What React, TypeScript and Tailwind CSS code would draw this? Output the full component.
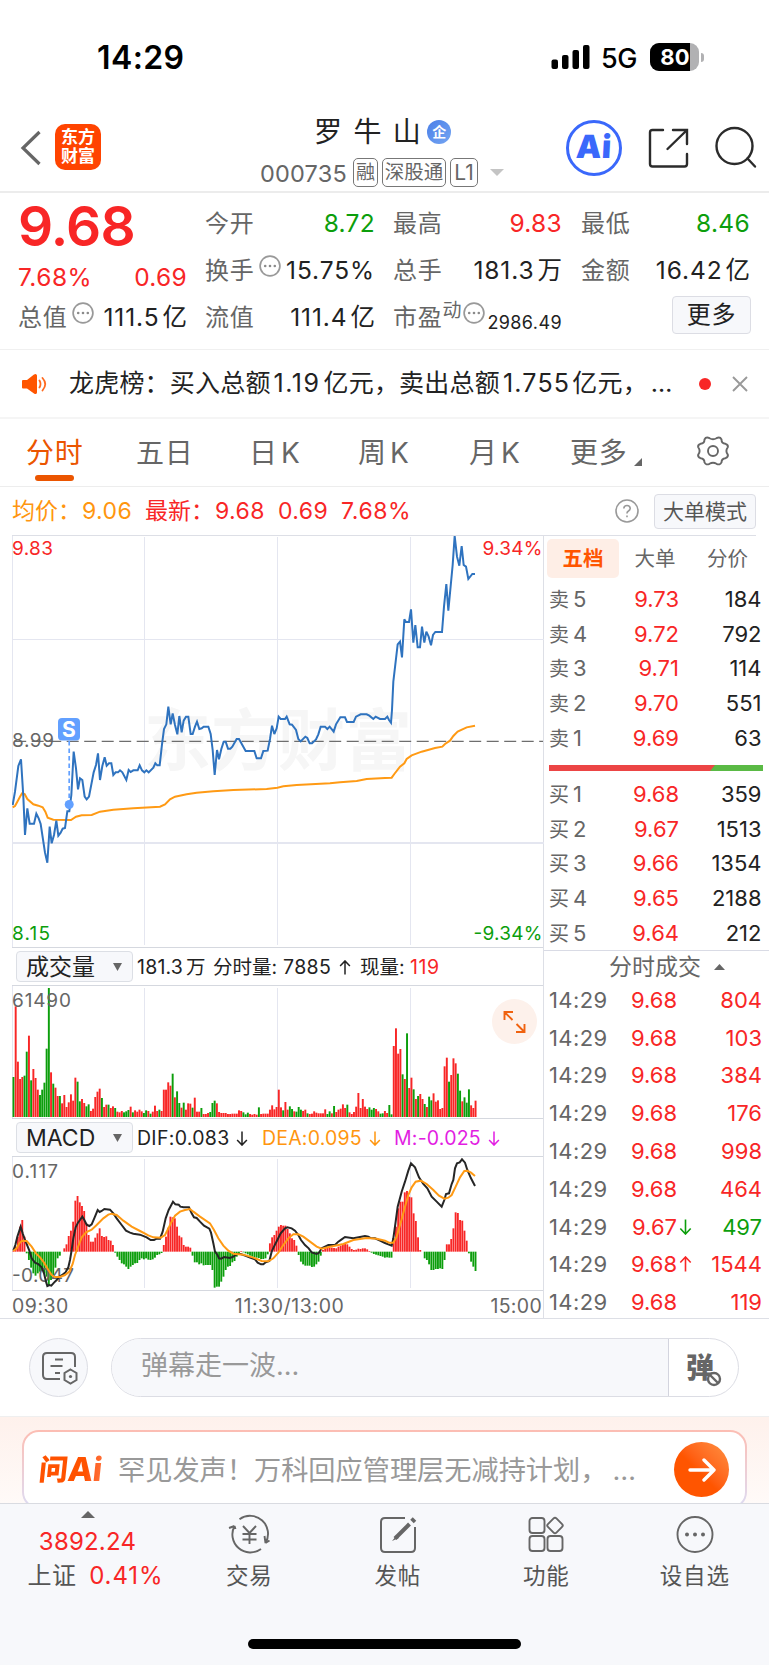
import React from "react";

type Tone = "up" | "down";

const priceLine =
  "38,315 45,275 55,198 63,178 70,290 75,405 82,325 89,371 102,371 109,341 116,355 122,372 135,458 142,488 149,380 155,430 162,405 169,362 175,407 182,398 188,386 195,384 202,334 208,334 214,285 221,155 228,205 234,268 240,235 247,240 254,290 260,298 267,290 281,217 288,195 294,160 300,240 307,198 314,172 320,197 327,190 334,190 340,225 347,217 354,217 360,211 367,217 379,240 386,210 392,216 400,211 413,211 419,196 426,211 433,217 439,211 446,217 460,203 466,190 472,196 479,196 486,133 492,87 499,73 505,20 512,73 518,40 525,75 532,103 538,48 545,97 551,62 558,50 565,50 572,102 578,102 585,80 591,65 598,87 605,85 611,80 625,80 632,102 638,150 644,225 651,150 657,178 664,147 671,125 677,125 684,146 691,146 697,140 710,117 717,117 737,153 763,153 770,175 783,175 790,153 803,152 810,117 816,77 823,102 830,85 836,50 842,57 855,57 860,50 869,73 876,74 888,90 895,117 902,124 916,110 922,114 929,130 936,130 948,118 955,103 962,80 975,80 982,87 989,80 1001,95 1008,73 1021,52 1035,52 1041,66 1061,66 1068,50 1082,43 1100,43 1108,47 1120,57 1127,50 1140,57 1155,57 1162,50 1167,60 1173,68 1176,30 1180,-55 1193,-167 1200,-175 1206,-128 1213,-242 1218,-234 1227,-234 1233,-272 1240,-172 1246,-225 1253,-158 1260,-158 1266,-220 1273,-172 1279,-205 1286,-190 1293,-164 1299,-195 1306,-204 1326,-204 1332,-280 1339,-348 1345,-268 1358,-405 1364,-492 1371,-430 1378,-403 1385,-462 1391,-405 1398,-400 1405,-363 1417,-378 1425,-378";

const averageLine =
  "38,322 45,318 52,305 60,290 66,280 74,282 82,297 100,313 115,317 128,322 136,335 143,353 160,359 213,360 228,350 245,346 275,345 300,335 340,329 400,325 480,320 495,313 510,298 525,290 560,283 590,278 640,274 700,270 800,267 832,263 850,259 890,255 990,250 1020,247 1070,243 1100,237 1155,234 1175,233 1183,222 1200,200 1213,190 1220,177 1235,166 1265,155 1305,144 1327,140 1335,132 1350,122 1360,108 1373,95 1400,82 1425,77";

// One entry per minute; negative values are falling minutes.
const volumes = [
  -120, 332, 166, 114, 120, -124, -196, 244, -110, 144, 117, 82, -66, -82, -103, -205, -387, 134, -100, 88, 63, -63, 41, 66, 30, 44, 68, 49, 118, -106,
  -47, 54, 42, -32, -38, 18, 25, 60, 76, 85, -57, 30, 37, -37, 27, 32, -27, 16, 14, 18, -14, -17, -21, 31, -14, 20, 16, 22, 17, -12,
  -20, 18, -10, 16, 34, 18, -22, 18, 82, 82, 104, 94, -130, 59, -77, -42, 28, -43, 22, 41, 40, -28, 58, 16, 16, -27, 9, 9, 12, -15,
  -42, -49, 41, 15, 12, 12, 12, 9, 9, 10, 10, 10, 20, 18, -14, -8, -13, 9, 7, 9, 7, -29, 9, 10, 10, 10, 22, 35, 23, 30,
  82, 29, -20, 45, 22, -32, -24, 17, -16, -30, -22, 18, 22, -11, 9, 10, 17, 13, 11, 11, 11, 23, -9, -17, 11, -33, 15, 22, 25, 38,
  27, -37, 14, 9, 15, 31, 72, 27, 54, 31, 24, -29, -22, -27, 24, 17, -10, -11, 18, 12, -36, -8, 213, 266, 190, 204, -128, 114, -251, 87,
  118, -83, 54, -63, 69, 54, -39, 30, -61, -50, 71, 46, 50, 24, 27, 152, 178, -106, 126, 176, 161, -130, -79, 47, -59, -43, -83, 35, 27, 49,
];

const macdBars = [
  2, 15, 45, 75, 95, 45, -5, -25, -48, -65, -72, -65, -60, -58, -65, -75, -100, -85, -72, -48, -20, -12, 0, 10, 22, 47, 63, 90, 153, 167,
  148, 137, 122, 85, 50, 30, 30, 42, 55, 70, 47, 44, 46, 35, 33, 20, -3, -15, -25, -35, -38, -45, -52, -45, -40, -35, -34, -25, -20, -23,
  -20, -24, -25, -23, -18, -10, -8, -4, 20, 45, 72, 105, 103, 100, 75, 48, 43, 20, 15, 15, 12, -12, -32, -32, -38, -35, -41, -40, -40, -40,
  -55, -108, -105, -105, -90, -75, -55, -45, -43, -32, -28, -15, -5, 2, -2, -5, -8, -12, -15, -17, -18, -19, -22, -22, -20, -8, 25, 43, 50, 63,
  75, 80, 78, 78, 68, 55, 40, 35, 18, -10, -30, -38, -42, -42, -42, -46, -45, -38, -30, -12, 5, 10, 12, 12, 12, 11, 10, 15, 18, 22,
  26, 22, 15, 8, 5, 6, 9, 8, 10, 10, 7, 2, -3, -7, -9, -11, -13, -15, -18, -17, -18, -18, 40, 75, 130, 150, 150, 178, 182, 165,
  163, 115, 92, 43, 5, 0, -20, -25, -38, -55, -55, -52, -52, -50, -52, -25, 22, 22, 38, 70, 118, 116, 95, 93, 63, 33, -5, -30, -45, -58,
];

const difLine =
  "40,812 46,795 52,770 62,740 68,760 75,780 88,812 95,835 105,848 115,852 125,862 132,880 138,905 142,918 148,915 154,917 162,908 170,900 178,890 188,884 196,878 205,862 210,840 215,810 220,775 227,742 234,728 247,710 253,720 260,734 268,738 275,733 284,712 293,690 299,696 305,693 313,687 330,689 340,700 350,715 365,735 378,752 390,758 400,761 420,764 440,772 452,780 462,780 470,776 480,776 488,755 497,715 506,690 519,665 526,673 536,674 541,680 551,682 567,682 575,700 582,712 590,714 600,725 612,737 628,746 633,758 640,790 645,815 652,824 657,835 664,836 672,831 690,834 700,830 712,822 722,822 735,827 750,833 765,838 773,848 783,853 790,853 797,847 808,843 815,815 822,800 832,780 842,760 855,745 862,742 875,745 885,752 895,765 903,780 915,795 926,805 935,817 950,822 957,818 965,805 975,800 985,795 1005,795 1015,785 1025,778 1035,771 1060,775 1080,771 1095,768 1105,770 1112,774 1125,775 1140,782 1155,789 1165,793 1175,797 1180,775 1187,725 1193,680 1205,635 1215,605 1225,572 1233,550 1245,562 1257,592 1270,612 1282,625 1295,650 1310,665 1325,680 1333,660 1338,642 1347,640 1355,612 1360,600 1365,565 1371,550 1379,547 1386,538 1395,548 1402,570 1413,595 1425,618";

const deaLine =
  "40,813 50,805 58,790 66,782 80,783 95,800 108,820 120,832 132,848 145,870 155,885 165,891 180,891 195,885 208,875 218,852 225,825 235,798 245,772 258,757 275,749 290,735 310,715 325,704 335,701 350,705 370,722 395,740 420,753 445,766 460,772 482,773 495,765 505,745 515,725 525,707 540,695 555,690 570,687 580,695 600,710 630,730 642,750 655,775 670,797 685,812 700,821 730,824 760,833 785,843 805,844 820,835 835,818 850,795 865,775 880,763 895,763 910,770 930,785 950,800 965,806 990,800 1030,792 1060,780 1100,774 1130,776 1155,782 1167,788 1180,788 1190,770 1205,718 1215,680 1225,645 1235,622 1247,605 1262,602 1280,612 1300,630 1317,647 1333,656 1345,653 1355,645 1367,620 1380,592 1393,573 1402,572 1413,578 1425,588";

const RED = "#f82626";
const GREEN = "#0c9e0c";

function StatusBar() {
  return (
    <div className="flex h-[108px] shrink-0 items-start pl-[97px] pr-[65px] pt-[42px]">
      <span className="text-[32px] font-semibold leading-8 tracking-[0.400px] text-black">14:29</span>
      <div className="-mt-px ml-auto flex h-8 items-center">
        <svg className="h-6 w-[39px]" viewBox="0 0 39 24">
          <rect x="0.5" y="14.5" width="6.5" height="9.5" rx="2" />
          <rect x="11" y="10" width="6.5" height="14" rx="2" />
          <rect x="21.5" y="5" width="6.5" height="19" rx="2" />
          <rect x="32" y="0" width="6.5" height="24" rx="2" />
        </svg>
        <span className="ml-[11px] mt-[3px] w-[37px] whitespace-nowrap text-[27px] font-medium leading-none tracking-[-0.4px] text-black">5G</span>
        <div className="ml-[12px] flex h-7 w-[49px] overflow-hidden rounded-[9px] bg-[#b1b1b3]">
          <div className="flex w-10 items-center justify-end bg-black">
            <span className="text-[22px] font-bold leading-none tracking-[0.3px] text-white">80</span>
          </div>
        </div>
        <div className="ml-[2px] h-[9px] w-[3px] rounded-r-full bg-[#b1b1b3]" />
      </div>
    </div>
  );
}

function Header() {
  return (
    <div className="flex h-[85px] shrink-0 border-b-2 border-[#ececec]">
      <svg className="ml-[20px] mt-[22px] h-[36px] w-[22px]" viewBox="0 0 22 36" fill="none" stroke="#666" strokeWidth="3.2">
        <path d="M19.5 2 3 18 19.5 34" />
      </svg>
      <div className="ml-[13px] mt-4 flex h-[46px] w-[46px] flex-col items-center justify-center rounded-[10px] bg-[#ff4400] text-[17px] font-bold leading-[19px] text-white">
        <span>东方</span>
        <span>财富</span>
      </div>
      <div className="ml-[159px] flex w-[247px] flex-col">
        <div className="ml-[54px] flex h-[48px] items-center">
          <span className="text-[28px] leading-none tracking-[11.400px] text-[#222]">罗牛山</span>
          <span className="-ml-[5px] flex h-6 w-6 items-center justify-center rounded-full bg-gradient-to-br from-[#4a7fe8] to-[#75a5f2] text-[14px] font-bold leading-none text-white">
            企
          </span>
        </div>
        <div className="flex h-[34px] items-start pt-[2px] text-[#666]">
          <span className="w-[93px] pt-[4px] text-[23.500px] leading-none tracking-[0.200px]">000735</span>
          <span className="flex h-[29px] w-[25px] items-center justify-center rounded-[5px] border border-[#777] text-[19px] leading-none">融</span>
          <span className="ml-[4px] flex h-[29px] w-[64px] items-center justify-center rounded-[5px] border border-[#777] text-[19.5px] leading-none">深股通</span>
          <span className="ml-[4px] flex h-[29px] w-[28px] items-center justify-center rounded-[5px] border border-[#777] text-[21px] leading-none">L1</span>
          <svg className="ml-[12px] mt-[11px] h-[7px] w-[14px]" viewBox="0 0 14 7">
            <path d="M0 0h14L7 7z" fill="#c4c4c4" />
          </svg>
        </div>
      </div>
      <div className="ml-[59px] mt-[12px] flex h-[56px] w-[56px] items-center justify-center rounded-full border-[3px] border-[#3a68fb]">
        <span className="mt-[-2px] -skew-x-3 text-[32px] font-black leading-none tracking-[0.500px] text-[#3a68fb]">Ai</span>
      </div>
      <svg className="ml-[26px] mt-[20px] h-[41px] w-[41px]" viewBox="0 0 41 41" fill="none" stroke="#2b2b2b" strokeWidth="2.4" strokeLinecap="round">
        <path d="M15 2H4.500Q2 2 2 4.500V36Q2 38.500 4.500 38.500H36.500Q39 38.500 39 36V26" />
        <path d="M25 2H39V16M39 2 19.500 21" />
      </svg>
      <svg className="ml-[26px] mt-[18px] h-[44px] w-[44px]" viewBox="0 0 44 44" fill="none" stroke="#2b2b2b" strokeWidth="2.4" strokeLinecap="round">
        <circle cx="19.500" cy="20" r="18" />
        <path d="m32.500 32.500 7.500 8" />
      </svg>
    </div>
  );
}

function Dots() {
  return (
    <svg className="h-[22px] w-[22px] shrink-0" viewBox="0 0 22 22">
      <circle cx="11" cy="11" r="9.900" fill="none" stroke="#999" strokeWidth="1.700" />
      <g fill="#8a8a8a">
        <circle cx="6.200" cy="11" r="1.300" />
        <circle cx="11" cy="11" r="1.300" />
        <circle cx="15.800" cy="11" r="1.300" />
      </g>
    </svg>
  );
}

function Cell({ label, value, color = "text-[#222]", dots = false }: { label: string; value: string; color?: string; dots?: boolean }) {
  const unit = value.match(/[万亿]$/)?.[0];
  const num = unit ? value.slice(0, -1) : value;
  const tracking = value.length > 4 ? "tracking-[0.900px]" : "tracking-[0.300px]";
  return (
    <div className="flex h-[47px] items-center leading-none">
      <span className="text-[24px] tracking-[0.800px] text-[#666]">{label}</span>
      {dots && (
        <span className="ml-[4px] -mt-[9px]">
          <Dots />
        </span>
      )}
      <span className={`ml-auto whitespace-nowrap text-[24.500px] ${tracking} ${color}`}>
        {num}
        {unit && <span className="ml-[3px] tracking-normal">{unit}</span>}
      </span>
    </div>
  );
}

function Quote() {
  return (
    <div className="flex h-[157px] shrink-0 border-b border-[#f0f0f0] pl-[18px] pt-[7px]">
      <div className="w-[169px]">
        <div className="h-[55px] text-[55px] font-semibold leading-[53px] tracking-[-0.800px] text-[#f82626]">9.68</div>
        <div className="mt-[10px] flex h-[24px] items-center justify-between text-[24.500px] leading-none text-[#f82626]">
          <span className="tracking-[0.500px]">7.68%</span>
          <span className="tracking-[0.300px]">0.69</span>
        </div>
        <div className="mt-[5px]">
          <Cell label="总值" value="111.5亿" dots />
        </div>
      </div>
      <div className="ml-[18px] w-[170px]">
        <Cell label="今开" value="8.72" color="text-[#0c9e0c]" />
        <Cell label="换手" value="15.75%" dots />
        <Cell label="流值" value="111.4亿" />
      </div>
      <div className="ml-[18px] w-[169px]">
        <Cell label="最高" value="9.83" color="text-[#f82626]" />
        <Cell label="总手" value="181.3万" />
        <div className="flex h-[47px] items-center leading-none">
          <span className="text-[24px] tracking-[0.800px] text-[#666]">市盈</span>
          <span className="-mt-[15px] text-[19px] text-[#666]">动</span>
          <span className="ml-px -mt-[9px]">
            <Dots />
          </span>
          <span className="ml-auto mt-[10px] text-[18px] tracking-[0.400px] text-[#222]">2986.49</span>
        </div>
      </div>
      <div className="ml-[19px] w-[169px]">
        <Cell label="最低" value="8.46" color="text-[#0c9e0c]" />
        <Cell label="金额" value="16.42亿" />
        <div className="-mr-px ml-auto mt-[2px] flex h-[38px] w-[79px] items-center justify-center rounded-[4px] border border-[#dcdde4] bg-[#f7f8fb] text-[24px] leading-none tracking-[0.800px] text-[#222]">
          更多
        </div>
      </div>
    </div>
  );
}

function Notice() {
  return (
    <div className="flex h-[69px] shrink-0 items-center border-b-2 border-[#f5f5f5] pl-[21px] leading-none">
      <svg className="h-[22px] w-[27px]" viewBox="0 0 27 22">
        <path d="M1 8Q1 7 2 7H6L13 1.500Q15.500 0 16 2.500V19.500Q15.500 22 13 20.500L6 15.500H2Q1 15.500 1 14.500Z" fill="#ff5500" />
        <path d="M18.500 7.500Q20.500 11 18.500 14.500M21.500 5Q27 11 21.500 17.500" fill="none" stroke="#ff6a1f" strokeWidth="1.800" strokeLinecap="round" />
      </svg>
      <span className="ml-[21px] flex w-[600px] whitespace-nowrap text-[25px] tracking-[0.200px] text-[#222]">
        龙虎榜：买入总额<span className="ml-[3px] mr-[3px] tracking-[1.500px]">1.19</span>亿元，卖出总额<span className="ml-[3px] mr-[2px] tracking-[1.200px]">1.755</span>亿元，<span className="ml-[3px]">…</span>
      </span>
      <span className="ml-[30px] h-[12px] w-[12px] rounded-full bg-[#f82626]" />
      <svg className="ml-[20px] h-[18px] w-[18px]" viewBox="0 0 18 18" stroke="#999" strokeWidth="1.900">
        <path d="m2 2 14 14M16 2 2 16" />
      </svg>
    </div>
  );
}

function Tabs() {
  return (
    <div className="flex h-[68px] shrink-0 border-b border-[#ededed] pl-[26px] text-[28px] leading-none text-[#666]">
      <div className="relative flex w-[110px] items-center tracking-[0.800px] text-[#eb5500]">
        分时
        <span className="absolute left-[9px] top-[56px] h-[6px] w-[39px] rounded-full bg-[#eb5500]" />
      </div>
      <span className="flex w-[113px] items-center tracking-[0.800px]">五日</span>
      <span className="flex w-[109px] items-center">日<span className="ml-[4px]">K</span></span>
      <span className="flex w-[111px] items-center">周<span className="ml-[4px]">K</span></span>
      <span className="flex w-[101px] items-center">月<span className="ml-[4px]">K</span></span>
      <span className="flex w-[64px] items-center tracking-[0.800px]">更多</span>
      <svg className="mt-[39px] h-[8px] w-[8px]" viewBox="0 0 8 8">
        <path d="M8 0V8H0z" fill="#666" />
      </svg>
      <svg className="ml-[54px] mt-[16px] h-[32px] w-[34px]" viewBox="0 0 34 32" fill="none" stroke="#666" strokeWidth="1.900" strokeLinejoin="round">
        <circle cx="17" cy="16" r="5" />
        <path d="M13.500 3.200Q10 1.500 8.500 4.500Q8.500 8.500 4.500 8.800Q1.500 9.800 2.200 12.200Q5 16 2.200 19.600Q1.500 22 4.500 23.200Q8.500 23.500 8.500 27.400Q10 30.500 13.500 28.800Q17 26.800 20.500 28.800Q24 30.500 25.500 27.400Q25.500 23.500 29.500 23.200Q32.500 22 31.800 19.600Q29 16 31.800 12.200Q32.500 9.800 29.500 8.800Q25.500 8.500 25.500 4.500Q24 1.500 20.500 3.200Q17 5.200 13.500 3.200Z" />
      </svg>
    </div>
  );
}

function InfoRow() {
  return (
    <div className="ml-3 mr-[13px] flex h-[49px] shrink-0 items-center whitespace-nowrap border-b border-[#dddfe6] text-[23px] leading-none text-[#f82626]">
      <span className="w-[70px] text-[#ff960f]">均价：</span>
      <span className="w-[63px] tracking-[0.400px] text-[#ff960f]">9.06</span>
      <span className="w-[70px]">最新：</span>
      <span className="w-[63px] tracking-[0.400px]">9.68</span>
      <span className="w-[63px] tracking-[0.400px]">0.69</span>
      <span className="w-[72px] tracking-[0.600px]">7.68%</span>
      <svg className="ml-auto h-6 w-6" viewBox="0 0 24 24" fill="none" stroke="#999" strokeWidth="1.600">
        <circle cx="12" cy="12" r="11" />
        <path d="M8.800 9.500Q9 6.500 12 6.500T15.200 9.300Q15.200 11 13.500 12T12 14.500M12 16.500V18.300" />
      </svg>
      <span className="ml-[15px] flex h-[35px] w-[102px] items-center justify-center rounded-[4px] border border-[#dcdde4] bg-[#f7f8fb] text-[21px] text-[#555]">
        大单模式
      </span>
    </div>
  );
}

function PriceChart() {
  return (
    <svg className="h-[411px] w-[532px] shrink-0 font-['Inter','Noto_Sans_CJK_SC',sans-serif]" viewBox="12 536 532 411" fontSize="19">
      <g fontSize="67" fontWeight="700" fill="#f6f6f6">
        <text x="144" y="765">东方财富</text>
      </g>
      <g stroke="#e4e6f0" strokeWidth="1">
        <path d="M12.500 536V947M144.500 537V945M277.500 537V945M410.500 537V945M12 639.500H544" />
        <path d="M12 843H544" strokeWidth="2" />
      </g>
      <path d="M12 741.300H543" stroke="#6e6e6e" strokeWidth="1.300" strokeDasharray="12 5.500" strokeDashoffset="-2.200" fill="none" />
      <text x="12" y="555" fill={RED} textLength="41">9.83</text>
      <text x="542.500" y="555" fill={RED} textAnchor="end" textLength="60">9.34%</text>
      <text x="12" y="747" fill="#666" textLength="42">8.99</text>
      <text x="12" y="940" fill={GREEN} textLength="38">8.15</text>
      <text x="542.500" y="940" fill={GREEN} textAnchor="end" textLength="69">-9.34%</text>
      <g transform="translate(0 700) scale(0.333333)" fill="none" strokeLinejoin="miter" strokeMiterlimit="3">
        <polyline points={averageLine} stroke="#ff9a14" strokeWidth="6" />
        <polyline points={priceLine} stroke="#2f73bf" strokeWidth="6" />
      </g>
      <path d="M69.200 741V800" stroke="#62a0ff" strokeWidth="1.700" strokeDasharray="4.500 3" />
      <circle cx="69.200" cy="804.500" r="4.500" fill="#62a0ff" />
      <rect x="58" y="718" width="22" height="22.500" rx="4" fill="#62a0ff" />
      <text x="69" y="736.500" fontSize="21" fontWeight="700" fill="#fff" textAnchor="middle">S</text>
    </svg>
  );
}

function Selector({ label }: { label: string }) {
  return (
    <span className="ml-1 flex h-[31px] w-[117px] shrink-0 items-center justify-between rounded-[4px] border border-[#dcdfe5] bg-[#f7f8fb] pl-[9px] pr-[10px] pt-px text-[23px] text-[#222]">
      {label}
      <svg className="h-[8px] w-[9px]" viewBox="0 0 9 8">
        <path d="M0 0H9L4.500 8z" fill="#666" />
      </svg>
    </span>
  );
}

function Arrow({ down = false, className }: { down?: boolean; className: string }) {
  return (
    <svg className={className} viewBox="0 0 12 16" fill="none" stroke="currentColor" strokeWidth="1.600">
      {down ? <path d="M6 0.500V15M0.800 9.500 6 15 11.200 9.500" /> : <path d="M6 15.500V1M0.800 6.500 6 1 11.200 6.500" />}
    </svg>
  );
}

function VolumeChart() {
  return (
    <svg className="h-[132px] w-[532px] shrink-0 font-['Inter',sans-serif]" viewBox="12 986 532 132" fontSize="19">
      <path d="M12.500 986V1118M144.500 988V1117M277.500 988V1117M410.500 988V1117" stroke="#e4e6f0" />
      <g transform="translate(0 980) scale(0.333333)">
        {volumes.map((v, i) => (
          <rect key={i} x={37.500 + i * 6.633} y={411 - Math.abs(v)} width="5.800" height={Math.abs(v)} fill={v > 0 ? RED : GREEN} />
        ))}
      </g>
      <text x="12" y="1006.500" fill="#666" textLength="59">61490</text>
      <circle cx="514.500" cy="1021.500" r="22.500" fill="#fdf1eb" />
      <path d="M504.500 1020V1012H513M505 1012.500 512.500 1020M524.500 1024V1032H516M524 1031.500 516.500 1024" fill="none" stroke="#f0620f" strokeWidth="1.900" />
    </svg>
  );
}

function MacdChart() {
  return (
    <svg className="h-[133px] w-[532px] shrink-0 font-['Inter',sans-serif]" viewBox="12 1157 532 133" fontSize="19">
      <path d="M12.500 1157V1290M144.500 1159V1288M277.500 1159V1288M410.500 1159V1288" stroke="#e4e6f0" />
      <g transform="translate(0 980) scale(0.333333)">
        {macdBars.map((v, i) => (
          <rect key={i} x={37.500 + i * 6.633} y={v > 0 ? 815 - v : 815} width="5.600" height={Math.abs(v)} fill={v > 0 ? RED : GREEN} />
        ))}
        <text x="36" y="905" fill="#666" fontSize="57" textLength="186">-0.047</text>
        <polyline points={difLine} fill="none" stroke="#262626" strokeWidth="6" />
        <polyline points={deaLine} fill="none" stroke="#ff9a14" strokeWidth="6" />
      </g>
      <text x="12" y="1178" fill="#666" textLength="46">0.117</text>
    </svg>
  );
}

function BookRow({ side, level, price, qty }: { side: string; level: number; price: string; qty: number }) {
  return (
    <div className="flex flex-1 items-center text-[22px] leading-none">
      <span className="w-[48px] text-[20px] text-[#666]">
        {side}
        <span className="ml-[4px] text-[22px]">{level}</span>
      </span>
      <span className="w-[82px] text-right text-[#f82626]">{price}</span>
      <span className="w-[82.500px] text-right text-[#222]">{qty}</span>
    </div>
  );
}

const sells: [string, number][] = [["9.73", 184], ["9.72", 792], ["9.71", 114], ["9.70", 551], ["9.69", 63]];
const buys: [string, number][] = [["9.68", 359], ["9.67", 1513], ["9.66", 1354], ["9.65", 2188], ["9.64", 212]];
const ticks: { price: string; qty: number; arrow?: Tone }[] = [
  { price: "9.68", qty: 804 },
  { price: "9.68", qty: 103 },
  { price: "9.68", qty: 384 },
  { price: "9.68", qty: 176 },
  { price: "9.68", qty: 998 },
  { price: "9.68", qty: 464 },
  { price: "9.67", qty: 497, arrow: "down" },
  { price: "9.68", qty: 1544, arrow: "up" },
  { price: "9.68", qty: 119 },
];

function OrderBook() {
  return (
    <div className="flex h-[782px] w-[225px] flex-col overflow-hidden">
      <div className="ml-[3px] mt-[3px] flex h-[39px] shrink-0 text-[20.500px] leading-none text-[#666]">
        <span className="flex w-[72px] items-center justify-center rounded-[5px] bg-[#feeee6] pt-px font-bold text-[#ff5500]">五档</span>
        <span className="flex w-[72px] items-center justify-center pt-[2px]">大单</span>
        <span className="flex w-[73px] items-center justify-center pt-[2px]">分价</span>
      </div>
      <div className="ml-[5px] mt-[4px] flex h-[173px] shrink-0 flex-col">
        {sells.map(([p, q], i) => (
          <BookRow key={p} side="卖" level={5 - i} price={p} qty={q} />
        ))}
      </div>
      <svg className="ml-[5px] mt-[10px] h-[6px] w-[214px] shrink-0" viewBox="0 0 214 6" preserveAspectRatio="none">
        <rect width="214" height="6" fill="#5aba45" />
        <path d="M0 0H166L161 6H0z" fill="#ec4545" />
      </svg>
      <div className="ml-[5px] mt-[6px] flex h-[173px] shrink-0 flex-col">
        {buys.map(([p, q], i) => (
          <BookRow key={p} side="买" level={i + 1} price={p} qty={q} />
        ))}
      </div>
      <div className="flex h-[31px] shrink-0 items-center border-t border-[#d9dbe5] pl-[65px] pt-[2px] text-[23px] leading-none text-[#666]">
        分时成交
        <svg className="ml-[13px] h-[6px] w-[11px]" viewBox="0 0 11 6">
          <path d="M0 6H11L5.500 0z" fill="#666" />
        </svg>
      </div>
      {ticks.map((t, i) => (
        <div key={i} className="flex h-[37.800px] shrink-0 items-center pl-[5px] text-[22px] leading-none text-[#f82626]">
          <span className="w-[59px] tracking-[0.400px] text-[#666]">14:29</span>
          <span className="w-[69px] text-right">{t.price}</span>
          <span className="w-[16px] pl-[2px]">
            {t.arrow && <Arrow down={t.arrow === "down"} className={t.arrow === "down" ? "h-[16px] w-[13px] text-[#0c9e0c]" : "h-[16px] w-[13px]"} />}
          </span>
          <span className={t.arrow === "down" ? "w-[69px] text-right text-[#0c9e0c]" : "w-[69px] text-right"}>{t.qty}</span>
        </div>
      ))}
    </div>
  );
}

function Market() {
  return (
    <div className="flex h-[783px] shrink-0 border-b border-[#dddfe6] pl-3">
      <div className="relative flex w-[532px] flex-col border-r border-[#dddfe6]">
        <PriceChart />
        <div className="flex h-[39px] shrink-0 items-center whitespace-nowrap border-y border-[#d5d8df] text-[19.500px] leading-none text-[#222]">
          <Selector label="成交量" />
          <span className="ml-[4px] w-[76px] pt-[2px] tracking-[0.200px]">181.3<span className="ml-[3px]">万</span></span>
          <span className="w-[70px] pt-[2px]">分时量:</span>
          <span className="w-[56px] pt-[2px] tracking-[0.400px]">7885</span>
          <Arrow className="mt-px h-[15px] w-[12px]" />
          <span className="ml-[9px] w-[50px] pt-[2px]">现量:</span>
          <span className="pt-[2px] tracking-[0.600px] text-[#f82626]">119</span>
        </div>
        <VolumeChart />
        <div className="flex h-[39px] shrink-0 items-center whitespace-nowrap border-y border-[#d5d8df] text-[19.500px] leading-none text-[#222]">
          <Selector label="MACD" />
          <span className="ml-[4px] w-[99px] pt-[2px] tracking-[0.300px]">DIF:0.083</span>
          <Arrow down className="mt-px h-[15px] w-[12px]" />
          <span className="ml-[14px] w-[107px] pt-[2px] tracking-[0.200px] text-[#ff960f]">DEA:0.095</span>
          <Arrow down className="mt-px h-[15px] w-[12px] text-[#ff960f]" />
          <span className="ml-[13px] w-[94px] pt-[2px] tracking-[0.200px] text-[#e21ee2]">M:-0.025</span>
          <Arrow down className="mt-px h-[15px] w-[12px] text-[#e21ee2]" />
        </div>
        <MacdChart />
        <div className="flex h-[28px] shrink-0 items-center justify-between border-t border-[#d5d8df] pr-px pt-[4px] text-[19.500px] leading-none text-[#666]">
          <span className="tracking-[0.500px]">09:30</span>
          <span className="ml-[20px] tracking-[0.600px]">11:30/13:00</span>
          <span className="tracking-[0.300px]">15:00</span>
        </div>
      </div>
      <OrderBook />
    </div>
  );
}

function CommentBar() {
  return (
    <div className="flex h-[98px] shrink-0 items-center border-b border-[#efefef] pl-[29px]">
      <div className="flex h-[59px] w-[59px] items-center justify-center rounded-full border border-[#dcdde4] bg-[#f7f8fb]">
        <svg className="ml-[2px] mt-px h-[34px] w-[38px]" viewBox="0 0 38 34" fill="none" stroke="#666" strokeWidth="2">
          <path d="M34 16V6Q34 2 30 2H6Q2 2 2 6V24Q2 28 6 28H19M14 8.500H22M9.500 15H21.500M14 22H19" />
          <path d="m29.500 18.500 6 3.500v7l-6 3.500-6-3.500v-7z" />
          <circle cx="29.500" cy="25.500" r="1.600" fill="#666" stroke="none" />
        </svg>
      </div>
      <div className="ml-[23px] flex h-[59px] w-[628px] overflow-hidden rounded-full border border-[#dcdde4]">
        <div className="flex w-[557px] items-center border-r border-[#d3d4de] bg-[#f7f8fb] pb-[4px] pl-[29px] text-[27px] leading-none text-[#999]">弹幕走一波...</div>
        <div className="flex flex-1 items-center pl-[17px]">
          <span className="text-[28px] font-black leading-none text-[#666]">弹</span>
          <svg className="-ml-[8px] mt-[22px] h-[16px] w-[16px] shrink-0" viewBox="0 0 16 16" fill="#fff" stroke="#666" strokeWidth="2.400">
            <circle cx="8" cy="8" r="6" />
            <path d="m4 4 8 8" />
          </svg>
        </div>
      </div>
    </div>
  );
}

function AskBar() {
  return (
    <div className="h-[86px] shrink-0 overflow-hidden bg-gradient-to-b from-[#fef1ec] to-[#fffaf8] pl-[22px] pr-[22px] pt-[13px]">
      <div className="h-[79px] rounded-[17px] bg-gradient-to-b from-[#fcbdb3] to-[#dcdcf4] p-[2px]">
        <div className="flex h-full items-center rounded-[15px] bg-white pl-[15px] leading-none">
          <span className="flex w-[79px] -skew-x-6 items-center bg-gradient-to-r from-[#ff5200] from-60% to-[#ff8a55] bg-clip-text text-transparent">
            <span className="text-[29px] font-black">问</span>
            <span className="text-[33px] font-extrabold tracking-[-0.500px]">Ai</span>
          </span>
          <span className="flex w-[552px] whitespace-nowrap pt-[2px] text-[27.200px] text-[#999]">罕见发声！万科回应管理层无减持计划，<span className="ml-[5px]">…</span></span>
          <span className="ml-[4px] flex h-[55px] w-[55px] shrink-0 items-center justify-center rounded-full bg-gradient-to-tr from-[#ff5500] from-45% to-[#ff9040]">
            <svg className="h-[24px] w-[28px]" viewBox="0 0 28 24" fill="none" stroke="#fff" strokeWidth="3.400" strokeLinecap="round" strokeLinejoin="round">
              <path d="M2 12H26M16 2 26 12 16 22" />
            </svg>
          </span>
        </div>
      </div>
    </div>
  );
}

function NavItem({ label, children }: { label: string; children: React.ReactNode }) {
  return (
    <div className="flex w-[148.500px] flex-col items-center">
      <svg className="mt-[10px] h-[42px] w-[44px]" viewBox="0 0 44 42" fill="none" stroke="#666" strokeWidth="1.900">
        {children}
      </svg>
      <span className="mt-[9px] whitespace-nowrap text-[22.500px] leading-none tracking-[0.800px] text-[#555]">{label}</span>
    </div>
  );
}

function BottomNav() {
  return (
    <div className="flex h-[162px] shrink-0 flex-col border-t border-[#d9dbe1] bg-[#f7f8fb]">
      <div className="flex h-[135px]">
        <div className="flex w-[175px] flex-col items-center text-[#f82626]">
          <svg className="mt-[7px] h-[7px] w-[14px]" viewBox="0 0 14 7">
            <path d="M0 7H14L7 0z" fill="#666" />
          </svg>
          <span className="mt-[12px] text-[24px] leading-none tracking-[0.200px]">3892.24</span>
          <span className="ml-[16px] mt-[10px] flex w-[136px] items-center whitespace-nowrap text-[24px] leading-none tracking-[0.900px]">
            <span className="w-[63px] tracking-[0.500px] text-[#555]">上证</span>0.41%
          </span>
        </div>
        <NavItem label="交易">
          <path d="M12.500 5.200A18 18 0 0 1 38.500 29M38.500 29 37.500 22M38.500 29 42.500 26.500M34 35A18 18 0 0 1 7.500 12M7.500 12 2 14M7.500 12 8.500 15" />
          <path d="M16 12 22.500 19 29 12M22.500 19V30M15.500 20H29.500M15.500 25.500H29.500" />
        </NavItem>
        <NavItem label="发帖">
          <path d="M29 4H9Q5 4 5 8V34Q5 38 9 38H35Q39 38 39 34V13" strokeWidth="2" />
          <path d="M33.500 10 19 24.500" strokeWidth="4" />
          <path d="M36 7.500 38.500 5" strokeWidth="5" />
          <path d="m20.500 21.500-4.500 5.500 7-3z" fill="#666" stroke="none" />
        </NavItem>
        <NavItem label="功能">
          <rect x="5.500" y="4" width="15" height="15" rx="3" />
          <rect x="5.500" y="22" width="15" height="15" rx="3" />
          <rect x="23.500" y="22" width="15" height="15" rx="3" />
          <rect x="25" y="5.500" width="12" height="12" rx="2" transform="rotate(45 31 11.500)" />
        </NavItem>
        <NavItem label="设自选">
          <circle cx="22" cy="20.500" r="17.500" />
          <g fill="#666" stroke="none">
            <circle cx="14" cy="20.500" r="2" />
            <circle cx="22" cy="20.500" r="2" />
            <circle cx="30" cy="20.500" r="2" />
          </g>
        </NavItem>
      </div>
      <div className="ml-[248px] h-[10px] w-[273px] rounded-full bg-black" />
    </div>
  );
}

export default function App() {
  return (
    <div className="flex h-[1665px] w-[769px] flex-col overflow-hidden bg-white font-['Inter','Noto_Sans_CJK_SC',sans-serif] font-[385]">
      <StatusBar />
      <Header />
      <Quote />
      <Notice />
      <Tabs />
      <InfoRow />
      <Market />
      <CommentBar />
      <AskBar />
      <BottomNav />
    </div>
  );
}
